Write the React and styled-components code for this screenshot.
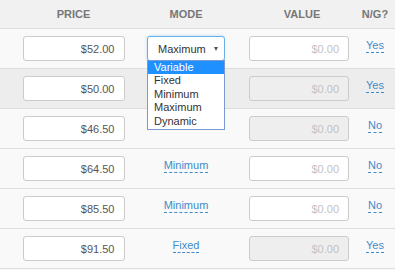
import styled, { createGlobalStyle } from 'styled-components';

const GlobalStyle = createGlobalStyle`
  html, body {
    margin: 0;
    padding: 0;
    background: #f9f9f9;
    font-family: 'Liberation Sans', Arial, sans-serif;
  }
`;

const Table = styled.div`
  width: 395px;
  display: grid;
  grid-template-columns: 147px 78px 130px 40px;
  color: #555;
`;

const HeadCell = styled.div`
  height: 28px;
  background: #f1f1f1;
  border-bottom: 1px solid #dddddd;
  display: flex;
  align-items: center;
  justify-content: center;
  font-size: 11px;
  font-weight: bold;
  color: #777;
  padding-left: ${(p) => p.$padLeft || 0}px;
  width: ${(p) => (p.$width ? `${p.$width}px` : 'auto')};
`;

const Cell = styled.div`
  position: relative;
  height: 39px;
  border-bottom: 1px solid #dddddd;
  background: ${(p) => (p.$hover ? '#ededed' : '#f9f9f9')};
  display: flex;
  align-items: center;
  justify-content: ${(p) => p.$justify || 'center'};
  padding-left: ${(p) => p.$padLeft || 0}px;
`;

const TextInput = styled.div`
  box-sizing: border-box;
  width: ${(p) => p.$width}px;
  height: 25px;
  border: 1px solid #cccccc;
  border-radius: 3px;
  background: ${(p) => (p.$disabled ? '#eeeeee' : '#ffffff')};
  color: ${(p) => (p.$placeholder ? '#c2c2c2' : '#555555')};
  font-size: 11px;
  display: flex;
  align-items: center;
  justify-content: flex-end;
  padding-right: 9px;
`;

const Select = styled.div`
  box-sizing: border-box;
  width: 78px;
  height: 25px;
  border: 1px solid #66afe9;
  border-radius: 3px;
  background: #fff;
  box-shadow: 0 0 3px rgba(102, 175, 233, 0.5);
  display: flex;
  align-items: center;
  justify-content: space-between;
  padding: 0 6px 0 10px;
  font-size: 11px;
  color: #333;
`;

const Caret = styled.span`
  width: 0;
  height: 0;
  border-left: 2.5px solid transparent;
  border-right: 2.5px solid transparent;
  border-top: 4px solid #555;
  margin-top: 1px;
`;

const Options = styled.ul`
  position: absolute;
  left: 0;
  top: 31px;
  z-index: 5;
  box-sizing: border-box;
  width: 78px;
  margin: 0;
  padding: 0 0 1px;
  list-style: none;
  background: #fff;
  border: 1px solid #7a9ad4;
  font-size: 11px;
  color: #333;
`;

const Option = styled.li`
  height: 13.4px;
  line-height: 13.4px;
  padding-left: 6px;
  background: ${(p) => (p.$selected ? '#1e90ff' : 'transparent')};
  color: ${(p) => (p.$selected ? '#fff' : '#333')};
`;

const EditLink = styled.span`
  font-size: 11px;
  color: #428bca;
  border-bottom: 1px dashed #428bca;
  line-height: 13px;
  margin-top: -6px;
`;

const modes = ['Variable', 'Fixed', 'Minimum', 'Maximum', 'Dynamic'];

const rows = [
  { price: '$52.00', mode: 'select', valueDisabled: false, ng: 'Yes' },
  { price: '$50.00', mode: null, valueDisabled: true, ng: 'Yes', hover: true },
  { price: '$46.50', mode: null, valueDisabled: true, ng: 'No' },
  { price: '$64.50', mode: 'Minimum', valueDisabled: false, ng: 'No' },
  { price: '$85.50', mode: 'Minimum', valueDisabled: false, ng: 'No' },
  { price: '$91.50', mode: 'Fixed', valueDisabled: true, ng: 'Yes' },
];

const App = () => (
  <>
    <GlobalStyle />
    <Table>
      <HeadCell>PRICE</HeadCell>
      <HeadCell>MODE</HeadCell>
      <HeadCell $padLeft={24} $width={106}>VALUE</HeadCell>
      <HeadCell>N/G?</HeadCell>
      {rows.map((r, i) => [
        <Cell key={`p${i}`} $hover={r.hover}>
          <TextInput $width={102}>{r.price}</TextInput>
        </Cell>,
        <Cell key={`m${i}`} $hover={r.hover}>
          {r.mode === 'select' ? (
            <>
              <Select>
                Maximum <Caret />
              </Select>
              <Options>
                {modes.map((m, j) => (
                  <Option key={m} $selected={j === 0}>{m}</Option>
                ))}
              </Options>
            </>
          ) : (
            r.mode && <EditLink>{r.mode}</EditLink>
          )}
        </Cell>,
        <Cell key={`v${i}`} $hover={r.hover} $justify="flex-start" $padLeft={24}>
          <TextInput $width={100} $disabled={r.valueDisabled} $placeholder>$0.00</TextInput>
        </Cell>,
        <Cell key={`n${i}`} $hover={r.hover}>
          <EditLink>{r.ng}</EditLink>
        </Cell>,
      ])}
    </Table>
  </>
);

export default App;
